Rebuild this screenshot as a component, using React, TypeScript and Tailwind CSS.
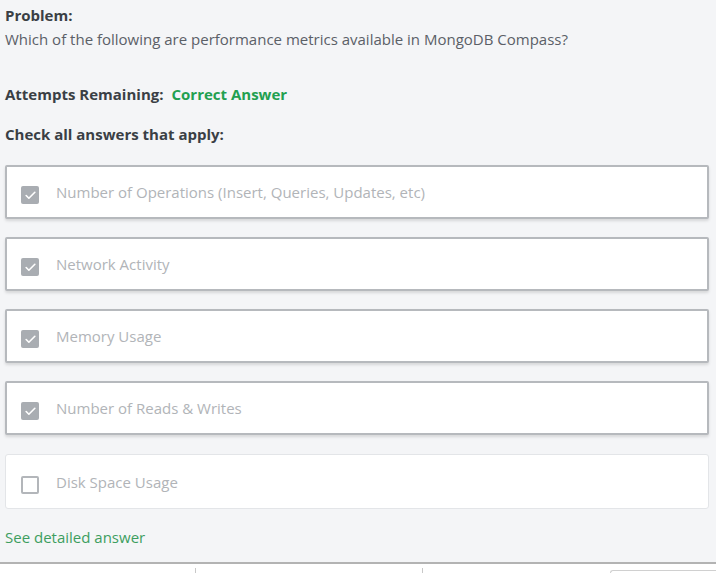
import { Check } from "lucide-react"

const options = [
  { label: "Number of Operations (Insert, Queries, Updates, etc)", checked: true },
  { label: "Network Activity", checked: true },
  { label: "Memory Usage", checked: true },
  { label: "Number of Reads & Writes", checked: true },
  { label: "Disk Space Usage", checked: false },
]

export default function App() {
  return (
    <div className="w-[716px] h-[573px] overflow-hidden bg-[#f4f5f7] flex flex-col font-['Open_Sans',sans-serif]">
      <div className="flex-1 pl-[5px] pr-[8px] pt-[5px]">
        <div className="text-[15px] font-bold text-[#3a3f45] leading-[20px]">Problem:</div>
        <div className="text-[15px] text-[#5b6067] leading-[20px] mt-[4px]">
          Which of the following are performance metrics available in MongoDB Compass?
        </div>

        <div className="flex items-center gap-[8px] mt-[35px] text-[15px] font-bold leading-[20px]">
          <span className="text-[#3a3f45]">Attempts Remaining:</span>
          <span className="text-[#22a050]">Correct Answer</span>
        </div>

        <div className="text-[15px] font-bold text-[#3a3f45] leading-[20px] mt-[20px]">
          Check all answers that apply:
        </div>

        <div className="flex flex-col gap-[18px] mt-[21px] w-[704px]">
          {options.map((o) => (
            <div
              key={o.label}
              className={
                o.checked
                  ? "h-[54px] bg-white border-2 border-[#b6b9bd] rounded-[2px] shadow-[0_2px_3px_rgba(0,0,0,0.12)] flex items-center pl-[14px]"
                  : "h-[55px] mt-[1px] bg-white border border-[#e3e5e8] rounded-[3px] flex items-center pl-[15px]"
              }
            >
              {o.checked ? (
                <span className="w-[18px] h-[18px] mt-[6px] rounded-[2px] bg-[#a9adb2] flex items-center justify-center">
                  <Check className="w-[13px] h-[13px] text-white" strokeWidth={3} />
                </span>
              ) : (
                <span className="w-[18px] h-[18px] mt-[6px] rounded-[2px] border-2 border-[#b3b6ba] bg-white" />
              )}
              <span className="ml-[17px] text-[15px] text-[#b1b4b8] leading-[20px]">{o.label}</span>
            </div>
          ))}
        </div>

        <div className="mt-[18px] text-[15px] text-[#3d9e5f] leading-[20px]">See detailed answer</div>
      </div>

      <div className="h-[11px] border-t-2 border-[#b3b3b3] bg-white relative">
        <span className="absolute left-[195px] top-[4px] w-px h-[7px] bg-[#c8c8c8]" />
        <span className="absolute left-[422px] top-[4px] w-px h-[7px] bg-[#c8c8c8]" />
        <span className="absolute left-[610px] top-[6px] right-0 h-[6px] border-t border-l border-[#d0d0d0] rounded-tl-[3px]" />
      </div>
    </div>
  )
}
